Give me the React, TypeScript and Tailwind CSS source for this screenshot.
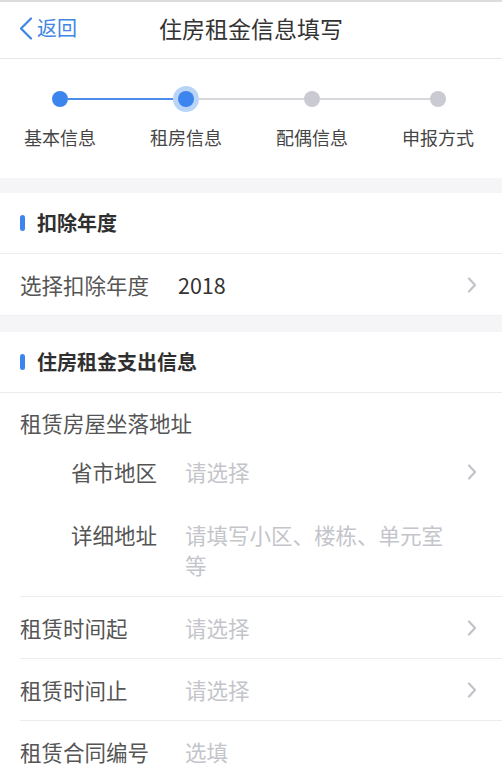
import type { ReactNode } from "react";

type StepState = "done" | "active" | "todo";

const steps: { label: string; state: StepState }[] = [
    { label: "基本信息", state: "done" },
    { label: "租房信息", state: "active" },
    { label: "配偶信息", state: "todo" },
    { label: "申报方式", state: "todo" },
];

const activeIndex = 1;

function Chevron() {
    return (
        <svg width="10" height="16" viewBox="0 0 10 16" className="shrink-0">
            <path d="M2 1.5 L8 8 L2 14.5" fill="none" stroke="#c2c3c8" strokeWidth="2.2" strokeLinecap="round" strokeLinejoin="round" />
        </svg>
    );
}

function Dot({ state }: { state: StepState }) {
    if (state === "active") {
        return (
            <div className="w-[26px] h-[26px] rounded-full bg-[#b9d4f7] flex items-center justify-center shrink-0">
                <div className="w-4 h-4 rounded-full bg-[#3d85ee]"></div>
            </div>
        );
    }
    return <div className={`w-4 h-4 rounded-full shrink-0 ${state === "done" ? "bg-[#3d85ee]" : "bg-[#c9cad2]"}`}></div>;
}

function Stepper() {
    return (
        <div className="bg-white pt-[27px] pb-[29px]">
            <div className="flex ml-[-3px]">
                {steps.map((s, i) => {
                    const left = i === 0 ? "bg-transparent" : i <= activeIndex ? "bg-[#4a8ce8]" : "bg-[#d7d8dc]";
                    const right = i === steps.length - 1 ? "bg-transparent" : i < activeIndex ? "bg-[#4a8ce8]" : "bg-[#d7d8dc]";
                    return (
                        <div key={s.label} className="w-[126px] flex flex-col items-center">
                            <div className="w-full h-[26px] flex items-center">
                                <div className={`flex-1 h-[2px] ${left}`}></div>
                                <Dot state={s.state} />
                                <div className={`flex-1 h-[2px] ${right}`}></div>
                            </div>
                            <div className="mt-[13px] text-[18px] leading-[24px] text-[#454545]">{s.label}</div>
                        </div>
                    );
                })}
            </div>
        </div>
    );
}

function SectionTitle({ children }: { children: ReactNode }) {
    return (
        <div className="h-[61px] flex items-center pl-5 border-b border-[#ececee] bg-white">
            <div className="w-[5px] h-4 rounded-full bg-[#3d85ee]"></div>
            <div className="ml-3 text-[20px] leading-[28px] font-bold text-[#2f2f2f]">{children}</div>
        </div>
    );
}

function Row({ label, value, placeholder, arrow, labelWidth = "w-[165px]", last }: {
    label: string;
    value?: string;
    placeholder?: string;
    arrow?: boolean;
    labelWidth?: string;
    last?: boolean;
}) {
    return (
        <div className={`ml-5 h-[62px] flex items-center pr-[25px] ${last ? "" : "border-b border-[#ececee]"}`}>
            <div className={`${labelWidth} shrink-0 text-[21.5px] leading-[30px] text-[#555]`}>{label}</div>
            <div className="flex-1 text-[21.5px] leading-[30px]">
                {value ? <span className="text-[#333]">{value}</span> : <span className="text-[#c4c5cb]">{placeholder}</span>}
            </div>
            {arrow && <Chevron />}
        </div>
    );
}

export default function App() {
    return (
        <div className="w-[502px] min-h-[766px] bg-[#f5f5f8] font-['Noto_Sans_CJK_SC',sans-serif]">
            {/* nav bar */}
            <div className="h-[59px] bg-white border-t-2 border-[#dcdcdc] border-b border-b-[#e6e6e8] flex items-center pb-[4px] relative">
                <div className="flex items-center pl-[19px] text-[#3f86e3]">
                    <svg width="14" height="23" viewBox="0 0 14 23">
                        <path d="M12 1.5 L2 11.5 L12 21.5" fill="none" stroke="#3f86e3" strokeWidth="2.2" strokeLinecap="round" strokeLinejoin="round" />
                    </svg>
                    <span className="ml-[4px] text-[20px] leading-[28px]">返回</span>
                </div>
                <div className="absolute left-0 right-0 text-center text-[23px] leading-[30px] text-[#333] pointer-events-none">住房租金信息填写</div>
            </div>

            <Stepper />

            <div className="h-[15px]"></div>

            <div className="bg-white">
                <SectionTitle>扣除年度</SectionTitle>
                <div className="h-[62px] flex items-center pl-5 pr-[25px] border-b border-[#f0f0f2]">
                    <div className="w-[158px] shrink-0 text-[21.5px] leading-[30px] text-[#555]">选择扣除年度</div>
                    <div className="flex-1 text-[21.5px] leading-[30px] text-[#333]">2018</div>
                    <Chevron />
                </div>
            </div>

            <div className="h-[16px]"></div>

            <div className="bg-white">
                <SectionTitle>住房租金支出信息</SectionTitle>
                <div className="ml-5 border-b border-[#ececee] pb-4">
                    <div className="pt-[15px] text-[21.5px] leading-[30px] text-[#555]">租赁房屋坐落地址</div>
                    <div className="flex items-center pt-[19px] pb-4 pl-[51px] pr-[25px]">
                        <div className="w-[114px] shrink-0 text-[21.5px] leading-[30px] text-[#555]">省市地区</div>
                        <div className="flex-1 text-[21.5px] leading-[30px] text-[#c4c5cb]">请选择</div>
                        <Chevron />
                    </div>
                    <div className="flex items-start pt-[17px] pl-[51px]">
                        <div className="w-[114px] shrink-0 text-[21.5px] leading-[30px] text-[#555]">详细地址</div>
                        <div className="w-[268px] text-[21.5px] leading-[30px] text-[#c4c5cb]">请填写小区、楼栋、单元室等</div>
                    </div>
                </div>
                <Row label="租赁时间起" placeholder="请选择" arrow />
                <Row label="租赁时间止" placeholder="请选择" arrow />
                <Row label="租赁合同编号" placeholder="选填" last />
            </div>
        </div>
    );
}
